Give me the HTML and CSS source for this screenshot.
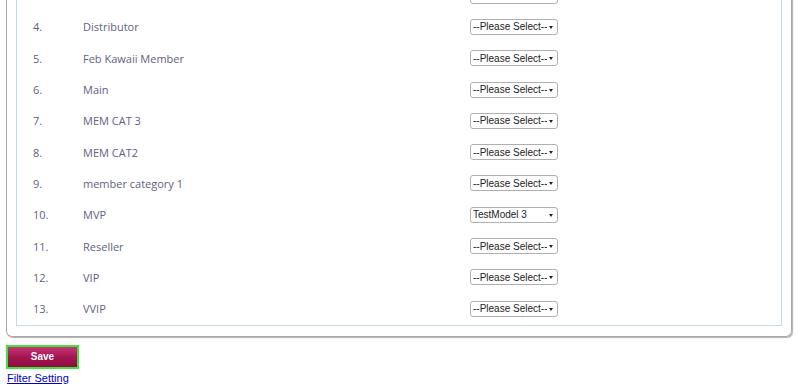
FILE: index.html
```html
<!DOCTYPE html>
<html lang="en">
<head>
  <meta charset="UTF-8">
  <title>Member Category Setting</title>
  <link rel="stylesheet" href="styles.css">
</head>
<body>

<div class="panel">
  <div class="inner">
    <div class="row">
      <span class="num"></span>
      <span class="label"></span>
      <span class="pick"><select><option>--Please Select--</option></select></span>
    </div>
    <div class="row">
      <span class="num">4.</span>
      <span class="label">Distributor</span>
      <span class="pick"><select><option>--Please Select--</option></select></span>
    </div>
    <div class="row">
      <span class="num">5.</span>
      <span class="label">Feb Kawaii Member</span>
      <span class="pick"><select><option>--Please Select--</option></select></span>
    </div>
    <div class="row">
      <span class="num">6.</span>
      <span class="label">Main</span>
      <span class="pick"><select><option>--Please Select--</option></select></span>
    </div>
    <div class="row">
      <span class="num">7.</span>
      <span class="label">MEM CAT 3</span>
      <span class="pick"><select><option>--Please Select--</option></select></span>
    </div>
    <div class="row">
      <span class="num">8.</span>
      <span class="label">MEM CAT2</span>
      <span class="pick"><select><option>--Please Select--</option></select></span>
    </div>
    <div class="row">
      <span class="num">9.</span>
      <span class="label">member category 1</span>
      <span class="pick"><select><option>--Please Select--</option></select></span>
    </div>
    <div class="row">
      <span class="num">10.</span>
      <span class="label">MVP</span>
      <span class="pick"><select><option>TestModel 3</option></select></span>
    </div>
    <div class="row">
      <span class="num">11.</span>
      <span class="label">Reseller</span>
      <span class="pick"><select><option>--Please Select--</option></select></span>
    </div>
    <div class="row">
      <span class="num">12.</span>
      <span class="label">VIP</span>
      <span class="pick"><select><option>--Please Select--</option></select></span>
    </div>
    <div class="row">
      <span class="num">13.</span>
      <span class="label">VVIP</span>
      <span class="pick"><select><option>--Please Select--</option></select></span>
    </div>
  </div>
</div>

<div class="actions">
  <span class="save-wrap"><button type="submit" class="save-btn">Save</button></span>
  <a href="#" class="filter-link">Filter Setting</a>
</div>

</body>
</html>
```

FILE: styles.css
```css
body {
  margin: 0;
  background: #fff;
  font-family: 'Open Sans', 'DejaVu Sans', sans-serif;
}
.panel {
  margin: -20px 8px 0 6px;
  padding: 0 9px 10px;
  border: 1px solid #a8a8a8;
  border-top: none;
  border-radius: 0 0 6px 6px;
  box-shadow: 1px 1px 1px #b0b0b0;
}
.inner {
  padding: 0 0 1px 16px;
  border: 1px solid #c9d9e3;
  border-top: none;
}
.row {
  display: flex;
  align-items: center;
  height: 31.3px;
  font-size: 11px;
  color: #5f5f82;
}
.num {
  width: 50px;
}
.label {
  width: 387px;
}
.pick {
  position: relative;
  display: inline-block;
}
.pick select {
  appearance: none;
  -webkit-appearance: none;
  width: 88px;
  height: 16px;
  padding: 0 10px 0 2px;
  border: 1px solid #b0b0b0;
  border-radius: 3px;
  background: #fff;
  font-family: 'Liberation Sans', Arial, sans-serif;
  font-size: 10px;
  color: #222;
  display: block;
}
.pick::after {
  content: "";
  position: absolute;
  right: 5px;
  top: 7px;
  border-left: 2px solid transparent;
  border-right: 2px solid transparent;
  border-top: 3px solid #222;
  pointer-events: none;
}
.actions {
  padding: 6px 0 0 6px;
}
.save-wrap {
  display: inline-block;
  border: 2px solid #3ae63a;
}
.save-btn {
  display: block;
  width: 69px;
  height: 20px;
  border: none;
  padding: 0;
  background: linear-gradient(#c8357a, #a3164f 50%, #8e0c42);
  color: #fff;
  font-family: 'Liberation Sans', Arial, sans-serif;
  font-size: 10px;
  font-weight: bold;
  cursor: pointer;
}
.filter-link {
  display: block;
  margin: 3px 0 0 1px;
  font-family: 'Liberation Sans', Arial, sans-serif;
  font-size: 11px;
  color: #0000cc;
}
```
